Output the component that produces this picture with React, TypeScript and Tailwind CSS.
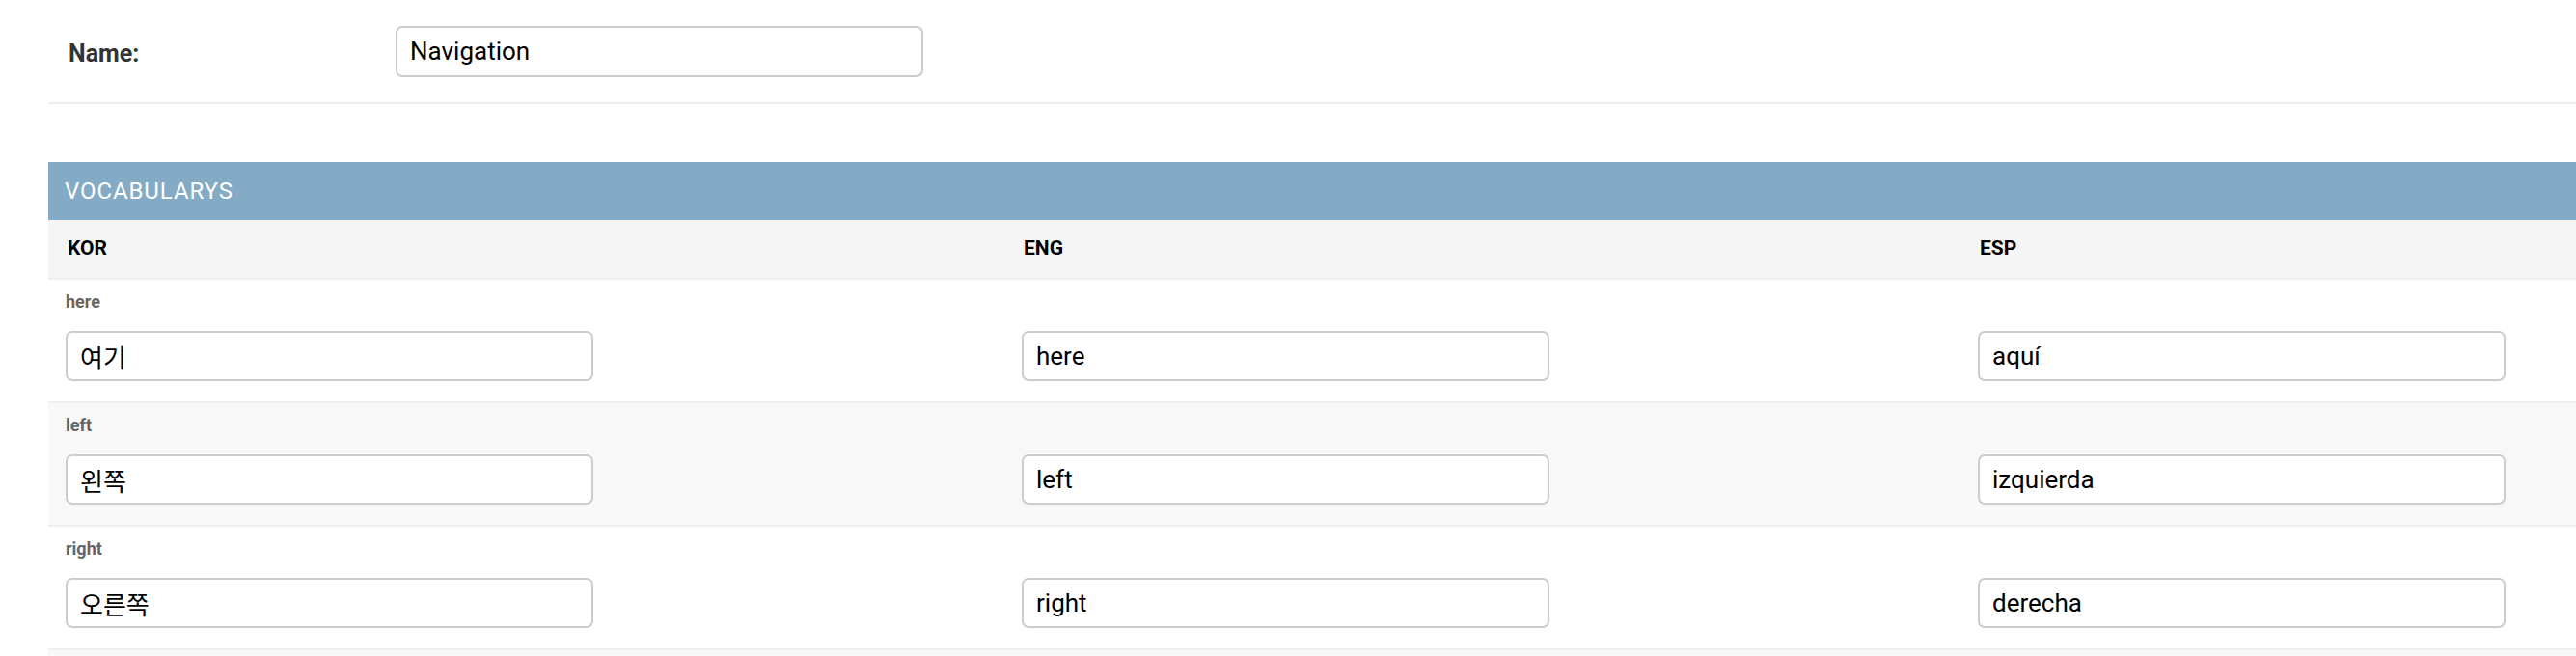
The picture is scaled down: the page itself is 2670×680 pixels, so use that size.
type Vocab = { key: string; kor: string; eng: string; esp: string };

const vocabularys: Vocab[] = [
  { key: "here", kor: "여기", eng: "here", esp: "aquí" },
  { key: "left", kor: "왼쪽", eng: "left", esp: "izquierda" },
  { key: "right", kor: "오른쪽", eng: "right", esp: "derecha" },
];

const columns = ["KOR", "ENG", "ESP"];

function TextBox({ value }: { value: string }) {
  return (
    <input
      type="text"
      defaultValue={value}
      className="block h-[52px] w-[547px] rounded-[7px] border-2 border-[#cccccc] bg-white px-[13px] text-[26px] text-black outline-none"
    />
  );
}

export default function App() {
  return (
    <div className="h-[680px] w-full overflow-hidden bg-white pl-[50px] font-['Roboto','Noto_Sans_CJK_KR',sans-serif]">
      <div className="w-[3000px]">
        {/* name field */}
        <div className="flex h-[108px] items-center border-b-2 border-[#eeeeee] pl-[21px]">
          <label className="w-[339px] pt-[5px] text-[25px] font-bold text-[#333333]">Name:</label>
          <input
            type="text"
            defaultValue="Navigation"
            className="block h-[53px] w-[547px] rounded-[7px] border-2 border-[#cccccc] bg-white px-[13px] text-[26px] text-black outline-none"
          />
        </div>

        {/* inline table */}
        <div className="mt-[60px]">
          <h2 className="flex h-[60px] items-center bg-[#84abc6] px-[17px] text-[24px] uppercase tracking-[0.9px] text-white">
            Vocabularys
          </h2>
          <div className="grid h-[62px] grid-cols-[991px_991px_991px] items-center border-b-2 border-[#eeeeee] bg-[#f5f5f5]">
            {columns.map((c) => (
              <div key={c} className="pl-[20px] text-[21px] font-bold text-black">
                {c}
              </div>
            ))}
          </div>
          {vocabularys.map((v, i) => (
            <div
              key={v.key}
              className={`grid grid-cols-[991px_991px_991px] items-end border-b-2 border-[#eeeeee] ${i % 2 === 1 ? "bg-[#f8f8f8]" : "bg-white"}`}
            >
              <div className="pb-[21px] pl-[18px] pt-[12px]">
                <p className="mb-[19px] text-[18px] font-bold leading-[22px] text-[#666666]">{v.key}</p>
                <TextBox value={v.kor} />
              </div>
              <div className="pb-[21px] pl-[18px]">
                <TextBox value={v.eng} />
              </div>
              <div className="pb-[21px] pl-[18px]">
                <TextBox value={v.esp} />
              </div>
            </div>
          ))}
          <div className="h-[40px] bg-[#f8f8f8]" />
        </div>
      </div>
    </div>
  );
}
